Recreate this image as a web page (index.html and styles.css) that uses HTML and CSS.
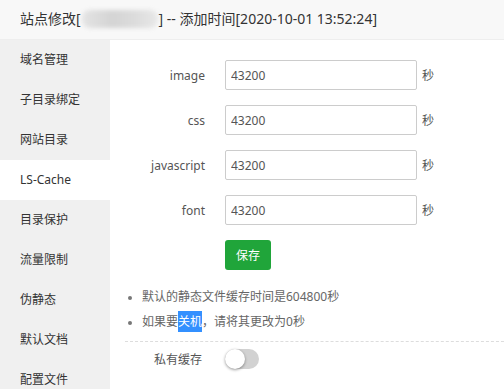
FILE: index.html
```html
<!DOCTYPE html>
<html lang="zh-CN">
<head>
    <meta charset="UTF-8">
    <meta name="viewport" content="width=device-width, initial-scale=1.0">
    <title>站点修改</title>
    <link rel="stylesheet" href="styles.css">
</head>
<body>
    <div class="layer-title">站点修改[<span class="masked"></span>] -- 添加时间[2020-10-01 13:52:24]</div>
    <div class="layer-body">
        <ul class="side-menu">
            <li>域名管理</li>
            <li>子目录绑定</li>
            <li>网站目录</li>
            <li class="active">LS-Cache</li>
            <li>目录保护</li>
            <li>流量限制</li>
            <li>伪静态</li>
            <li>默认文档</li>
            <li>配置文件</li>
        </ul>
        <div class="content">
            <form class="cache-form">
                <div class="line">
                    <span class="tname">image</span>
                    <input class="bt-input" type="text" value="43200">
                    <span class="unit">秒</span>
                </div>
                <div class="line">
                    <span class="tname">css</span>
                    <input class="bt-input" type="text" value="43200">
                    <span class="unit">秒</span>
                </div>
                <div class="line">
                    <span class="tname">javascript</span>
                    <input class="bt-input" type="text" value="43200">
                    <span class="unit">秒</span>
                </div>
                <div class="line">
                    <span class="tname">font</span>
                    <input class="bt-input" type="text" value="43200">
                    <span class="unit">秒</span>
                </div>
                <div class="line">
                    <span class="tname"></span>
                    <button type="button" class="btn-save">保存</button>
                </div>
            </form>
            <ul class="help">
                <li>默认的静态文件缓存时间是604800秒</li>
                <li>如果要<span class="selected">关机</span>，请将其更改为0秒</li>
            </ul>
            <div class="private-row">
                <span class="tname">私有缓存</span>
                <span class="switch"><span class="knob"></span></span>
            </div>
        </div>
    </div>
</body>
</html>
```

FILE: styles.css
```css
body {
    margin: 0;
    font-family: "Noto Sans", "Noto Sans CJK SC", sans-serif;
    font-size: 12px;
    color: #555;
    background: #fff;
    overflow: hidden;
}
.layer-title {
    height: 39px;
    line-height: 38px;
    padding-left: 20px;
    font-size: 14px;
    color: #333;
    background-color: #f8f8f8;
    border-bottom: 1px solid #eee;
}
.masked {
    display: inline-block;
    width: 76px;
    height: 18px;
    vertical-align: -4px;
    margin: 0 1px;
    border-radius: 8px;
    background: linear-gradient(90deg, #e4e4e4, #d4d4d4 40%, #dcdcdc 70%, #e8e8e8);
    filter: blur(2px);
}
.layer-body {
    display: flex;
}
.side-menu {
    list-style: none;
    margin: 0;
    padding: 0;
    width: 110px;
    flex-shrink: 0;
    background-color: #f0f0f0;
}
.side-menu li {
    height: 40px;
    line-height: 40px;
    padding-left: 20px;
    color: #333;
}
.side-menu li.active {
    background-color: #fff;
}
.content {
    flex: 1;
    padding: 20px 0 0 15px;
}
.line {
    display: flex;
    align-items: center;
    height: 30px;
    margin-bottom: 15px;
}
.tname {
    width: 80px;
    text-align: right;
    margin-right: 20px;
    color: #555;
}
.bt-input {
    width: 192px;
    height: 30px;
    box-sizing: border-box;
    border: 1px solid #ccc;
    border-radius: 2px;
    padding: 0 5px;
    font-family: inherit;
    font-size: 12px;
    color: #555;
    outline: none;
}
.unit {
    margin-left: 5px;
}
.btn-save {
    width: 46px;
    height: 30px;
    border: none;
    border-radius: 3px;
    background-color: #20a53a;
    color: #fff;
    font-family: inherit;
    font-size: 12px;
    padding: 0;
    cursor: pointer;
}
.help {
    margin: -1px 0 0;
    padding: 0 0 0 17px;
    color: #666;
    border-bottom: 1px dashed #ddd;
    padding-bottom: 7px;
    margin-right: -10px;
}
.help li {
    line-height: 25px;
}
.help li::marker {
    color: #777;
    font-size: 10px;
}
.selected {
    padding: 2px 0;
    background-color: #3390ff;
    color: #fff;
}
.private-row {
    display: flex;
    align-items: center;
    height: 30px;
    margin-top: 2px;
}
.private-row .tname {
    width: 77px;
    margin-right: 23px;
    color: #555;
}
.switch {
    position: relative;
    width: 34px;
    height: 20px;
    border-radius: 10px;
    background-color: #d2d2d2;
}
.knob {
    position: absolute;
    left: 0;
    top: 0;
    width: 20px;
    height: 20px;
    border-radius: 50%;
    background: #fff;
    box-shadow: 0 1px 3px rgba(0, 0, 0, 0.4);
}
```
